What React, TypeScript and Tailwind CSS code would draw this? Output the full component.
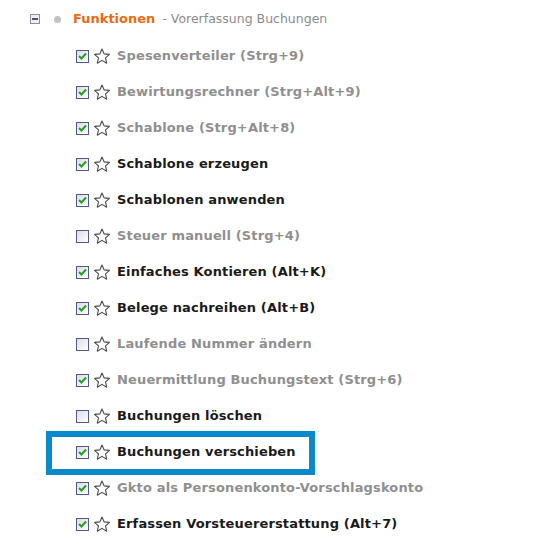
import React from "react";

type Item = { label: string; checked: boolean; active: boolean; highlight?: boolean };

const items: Item[] = [
  { label: "Spesenverteiler (Strg+9)", checked: true, active: false },
  { label: "Bewirtungsrechner (Strg+Alt+9)", checked: true, active: false },
  { label: "Schablone (Strg+Alt+8)", checked: true, active: false },
  { label: "Schablone erzeugen", checked: true, active: true },
  { label: "Schablonen anwenden", checked: true, active: true },
  { label: "Steuer manuell (Strg+4)", checked: false, active: false },
  { label: "Einfaches Kontieren (Alt+K)", checked: true, active: true },
  { label: "Belege nachreihen (Alt+B)", checked: true, active: true },
  { label: "Laufende Nummer ändern", checked: false, active: false },
  { label: "Neuermittlung Buchungstext (Strg+6)", checked: true, active: false },
  { label: "Buchungen löschen", checked: false, active: true },
  { label: "Buchungen verschieben", checked: true, active: true, highlight: true },
  { label: "Gkto als Personenkonto-Vorschlagskonto", checked: true, active: false },
  { label: "Erfassen Vorsteuererstattung (Alt+7)", checked: true, active: true },
];

function CheckBox({ checked }: { checked: boolean }) {
  return (
    <span className="flex h-[13px] w-[13px] shrink-0 items-center justify-center border border-[#4f5b86] bg-gradient-to-br from-[#dcdde6] to-[#ffffff]">
      {checked && (
        <svg width="9" height="8" viewBox="0 0 9 8">
          <path d="M1 4 L3.5 6.5 L8 1.5" fill="none" stroke="#21a121" strokeWidth="2" />
        </svg>
      )}
    </span>
  );
}

function Star() {
  return (
    <svg width="18" height="17" viewBox="0 0 18 17" className="shrink-0">
      <path
        d="M9 1 L11.2 5.9 L16.5 6.4 L12.5 9.9 L13.7 15.2 L9 12.4 L4.3 15.2 L5.5 9.9 L1.5 6.4 L6.8 5.9 Z"
        fill="none"
        stroke="#4a4a4a"
        strokeWidth="1.1"
        strokeLinejoin="round"
      />
    </svg>
  );
}

export default function App() {
  return (
    <div
      className="h-[536px] w-[539px] overflow-hidden bg-white"
      style={{ fontFamily: '"DejaVu Sans", Verdana, sans-serif' }}
    >
      <div className="flex h-[38px] items-center pl-[30px]">
        <span className="flex h-[10px] w-[10px] items-center justify-center border border-[#8a8f9a] bg-[#eef0f4]">
          <span className="h-[2px] w-[6px] bg-[#4a5670]" />
        </span>
        <span className="ml-[14px] h-[7px] w-[7px] rounded-full bg-[#c2c2c2]" />
        <span className="ml-[12px] text-[13px] font-bold text-[#ea6a10]">Funktionen</span>
        <span className="ml-[7px] text-[12.5px] text-[#8c8c8c]">- Vorerfassung Buchungen</span>
      </div>
      <div className="flex flex-col pl-[76px]">
        {items.map((it) => (
          <div key={it.label} className="relative flex h-[36px] items-center">
            {it.highlight && (
              <div className="absolute left-[-30px] top-[-3px] h-[44px] w-[269px] border-[6px] border-[#0a88cc]" />
            )}
            <CheckBox checked={it.checked} />
            <span className="ml-[4px]">
              <Star />
            </span>
            <span
              className={
                "ml-[6px] whitespace-nowrap text-[13px] font-bold tracking-[0.15px] " +
                (it.active ? "text-[#1a1a1a]" : "text-[#8f8f8f]")
              }
            >
              {it.label}
            </span>
          </div>
        ))}
      </div>
    </div>
  );
}
